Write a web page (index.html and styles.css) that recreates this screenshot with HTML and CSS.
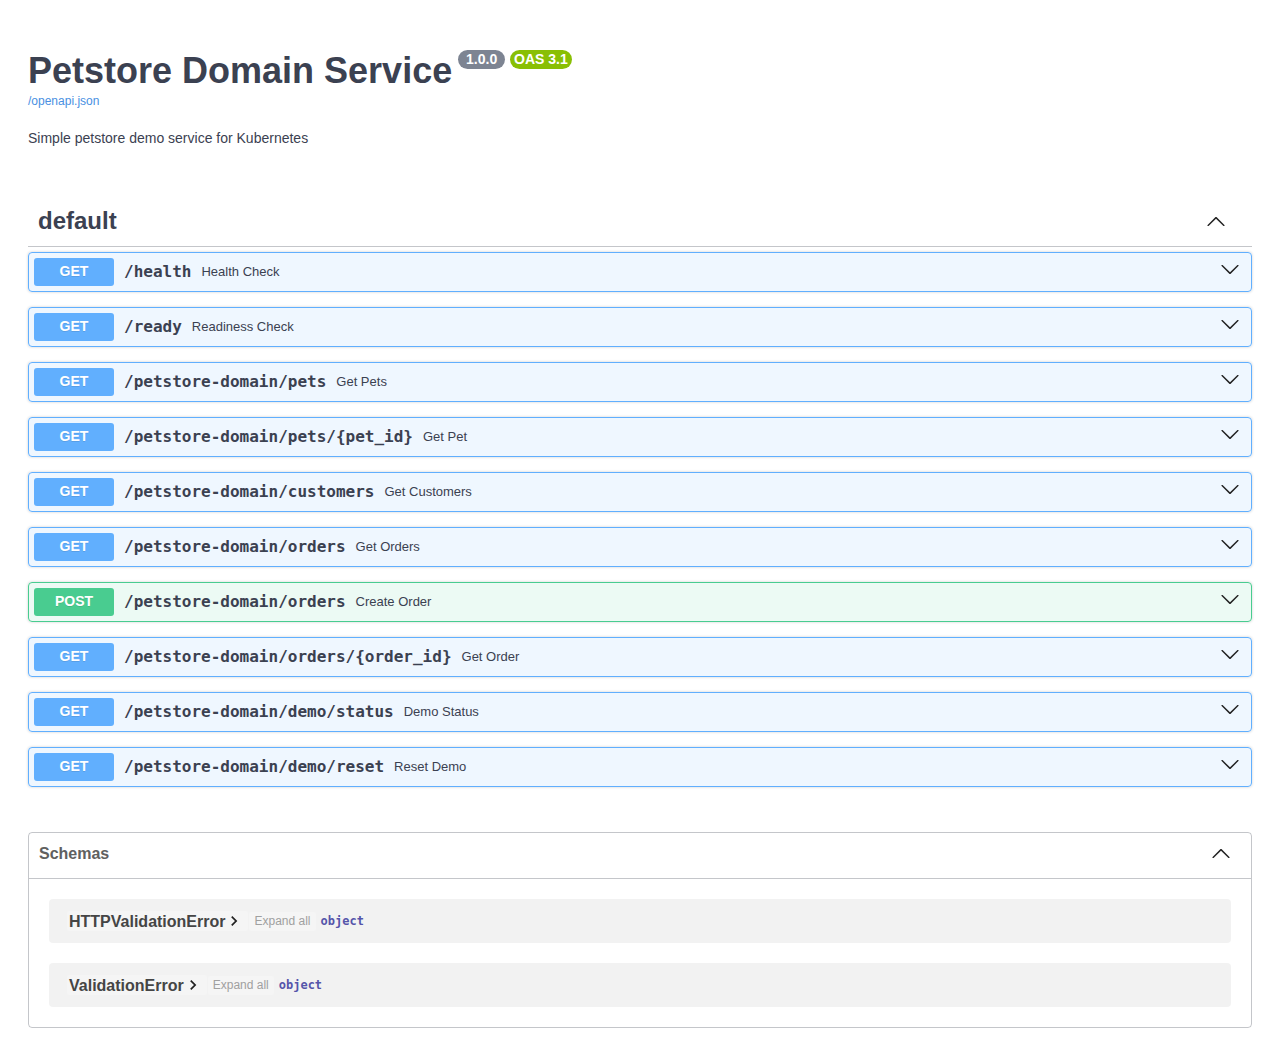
FILE: index.html
```html
<!DOCTYPE html>
<html lang="en">
<head>
<meta charset="utf-8">
<title>Petstore Domain Service</title>
<link rel="stylesheet" href="styles.css">
</head>
<body>
<div class="wrapper">
  <div class="info">
    <div class="title-row">
      <h2 class="title">Petstore Domain Service</h2>
      <span class="badge badge-version"> 1.0.0 </span>
      <span class="badge badge-oas">OAS 3.1</span>
    </div>
    <a class="link" href="#">/openapi.json</a>
    <p class="description">Simple petstore demo service for Kubernetes</p>
  </div>

  <div class="tag-section">
    <h3 class="tag">
      <span class="tag-name">default</span>
      <svg class="tag-arrow" viewBox="0 0 20 20"><path d="M17.418 14.908c.272.268.709.268.979 0s.271-.701 0-.969l-7.908-7.83c-.27-.268-.707-.268-.979 0l-7.908 7.83c-.27.268-.27.701 0 .969.271.268.709.268.979 0L10 7.767l7.418 7.141z"/></svg>
    </h3>

    <div class="opblock get"><span class="method">GET</span><span class="path">/health</span><span class="summary">Health Check</span><svg class="arrow" viewBox="0 0 20 20"><path d="M17.418 6.109c.272-.268.709-.268.979 0s.271.701 0 .969l-7.908 7.83c-.27.268-.707.268-.979 0l-7.908-7.83c-.27-.268-.27-.701 0-.969.271-.268.709-.268.979 0L10 13.25l7.418-7.141z"/></svg></div>
    <div class="opblock get"><span class="method">GET</span><span class="path">/ready</span><span class="summary">Readiness Check</span><svg class="arrow" viewBox="0 0 20 20"><path d="M17.418 6.109c.272-.268.709-.268.979 0s.271.701 0 .969l-7.908 7.83c-.27.268-.707.268-.979 0l-7.908-7.83c-.27-.268-.27-.701 0-.969.271-.268.709-.268.979 0L10 13.25l7.418-7.141z"/></svg></div>
    <div class="opblock get"><span class="method">GET</span><span class="path">/petstore-domain/pets</span><span class="summary">Get Pets</span><svg class="arrow" viewBox="0 0 20 20"><path d="M17.418 6.109c.272-.268.709-.268.979 0s.271.701 0 .969l-7.908 7.83c-.27.268-.707.268-.979 0l-7.908-7.83c-.27-.268-.27-.701 0-.969.271-.268.709-.268.979 0L10 13.25l7.418-7.141z"/></svg></div>
    <div class="opblock get"><span class="method">GET</span><span class="path">/petstore-domain/pets/{pet_id}</span><span class="summary">Get Pet</span><svg class="arrow" viewBox="0 0 20 20"><path d="M17.418 6.109c.272-.268.709-.268.979 0s.271.701 0 .969l-7.908 7.83c-.27.268-.707.268-.979 0l-7.908-7.83c-.27-.268-.27-.701 0-.969.271-.268.709-.268.979 0L10 13.25l7.418-7.141z"/></svg></div>
    <div class="opblock get"><span class="method">GET</span><span class="path">/petstore-domain/customers</span><span class="summary">Get Customers</span><svg class="arrow" viewBox="0 0 20 20"><path d="M17.418 6.109c.272-.268.709-.268.979 0s.271.701 0 .969l-7.908 7.83c-.27.268-.707.268-.979 0l-7.908-7.83c-.27-.268-.27-.701 0-.969.271-.268.709-.268.979 0L10 13.25l7.418-7.141z"/></svg></div>
    <div class="opblock get"><span class="method">GET</span><span class="path">/petstore-domain/orders</span><span class="summary">Get Orders</span><svg class="arrow" viewBox="0 0 20 20"><path d="M17.418 6.109c.272-.268.709-.268.979 0s.271.701 0 .969l-7.908 7.83c-.27.268-.707.268-.979 0l-7.908-7.83c-.27-.268-.27-.701 0-.969.271-.268.709-.268.979 0L10 13.25l7.418-7.141z"/></svg></div>
    <div class="opblock post"><span class="method">POST</span><span class="path">/petstore-domain/orders</span><span class="summary">Create Order</span><svg class="arrow" viewBox="0 0 20 20"><path d="M17.418 6.109c.272-.268.709-.268.979 0s.271.701 0 .969l-7.908 7.83c-.27.268-.707.268-.979 0l-7.908-7.83c-.27-.268-.27-.701 0-.969.271-.268.709-.268.979 0L10 13.25l7.418-7.141z"/></svg></div>
    <div class="opblock get"><span class="method">GET</span><span class="path">/petstore-domain/orders/{order_id}</span><span class="summary">Get Order</span><svg class="arrow" viewBox="0 0 20 20"><path d="M17.418 6.109c.272-.268.709-.268.979 0s.271.701 0 .969l-7.908 7.83c-.27.268-.707.268-.979 0l-7.908-7.83c-.27-.268-.27-.701 0-.969.271-.268.709-.268.979 0L10 13.25l7.418-7.141z"/></svg></div>
    <div class="opblock get"><span class="method">GET</span><span class="path">/petstore-domain/demo/status</span><span class="summary">Demo Status</span><svg class="arrow" viewBox="0 0 20 20"><path d="M17.418 6.109c.272-.268.709-.268.979 0s.271.701 0 .969l-7.908 7.83c-.27.268-.707.268-.979 0l-7.908-7.83c-.27-.268-.27-.701 0-.969.271-.268.709-.268.979 0L10 13.25l7.418-7.141z"/></svg></div>
    <div class="opblock get"><span class="method">GET</span><span class="path">/petstore-domain/demo/reset</span><span class="summary">Reset Demo</span><svg class="arrow" viewBox="0 0 20 20"><path d="M17.418 6.109c.272-.268.709-.268.979 0s.271.701 0 .969l-7.908 7.83c-.27.268-.707.268-.979 0l-7.908-7.83c-.27-.268-.27-.701 0-.969.271-.268.709-.268.979 0L10 13.25l7.418-7.141z"/></svg></div>
  </div>

  <section class="models">
    <h4 class="models-head">
      <span class="models-title">Schemas</span>
      <svg class="models-arrow" viewBox="0 0 20 20"><path d="M17.418 14.908c.272.268.709.268.979 0s.271-.701 0-.969l-7.908-7.83c-.27-.268-.707-.268-.979 0l-7.908 7.83c-.27.268-.27.701 0 .969.271.268.709.268.979 0L10 7.767l7.418 7.141z"/></svg>
    </h4>
    <div class="model-container">
      <span class="model-name">HTTPValidationError<svg class="model-toggle" viewBox="0 0 24 24"><path d="M10 6 8.59 7.41 13.17 12l-4.58 4.59L10 18l6-6z"/></svg></span>
      <span class="expand-all">Expand all</span>
      <span class="prop-type">object</span>
    </div>
    <div class="model-container">
      <span class="model-name">ValidationError<svg class="model-toggle" viewBox="0 0 24 24"><path d="M10 6 8.59 7.41 13.17 12l-4.58 4.59L10 18l6-6z"/></svg></span>
      <span class="expand-all">Expand all</span>
      <span class="prop-type">object</span>
    </div>
  </section>
</div>
</body>
</html>
```

FILE: styles.css
```css
html, body {
  margin: 0;
  padding: 0;
  background: #fff;
}

body {
  font-family: "Liberation Sans", Arial, sans-serif;
  color: #3b4151;
}

.wrapper {
  padding: 0 28px;
}

/* ---------- info ---------- */
.info {
  margin: 50px 0;
}

.title-row {
  display: flex;
  align-items: flex-start;
}

.title {
  margin: 0;
  font-size: 36px;
  line-height: 42px;
  font-weight: 700;
  color: #3b4151;
}

.badge {
  margin-left: 5px;
  padding: 2px 4px;
  border-radius: 57px;
  font-size: 14px;
  line-height: 15px;
  font-weight: 700;
  color: #fff;
  white-space: pre;
}

.badge-version {
  margin-left: 6px;
  background: #7d8492;
}

.badge-oas {
  background: #89bf04;
}

.link {
  display: block;
  margin-top: 2px;
  font-size: 12px;
  line-height: 14px;
  color: #4990e2;
  text-decoration: none;
}

.description {
  margin: 22px 0 0;
  font-size: 14px;
  line-height: 16px;
  color: #3b4151;
}

/* ---------- tag ---------- */
.tag-section {
  display: flow-root;
}

.tag {
  display: flex;
  align-items: center;
  margin: 0 0 5px;
  padding: 10px 20px 10px 10px;
  border-bottom: 1px solid rgba(59, 65, 81, 0.3);
  font-size: 24px;
  line-height: 30px;
  font-weight: 700;
  color: #3b4151;
}

.tag-name {
  flex: 1;
}

.tag-arrow {
  width: 20px;
  height: 20px;
  margin-right: 6px;
  fill: #222;
}

/* ---------- operations ---------- */
.opblock {
  display: flex;
  align-items: center;
  margin-bottom: 15px;
  padding: 5px;
  border: 1px solid #61affe;
  border-radius: 4px;
  background: rgba(97, 175, 254, 0.1);
  box-shadow: 0 0 3px rgba(0, 0, 0, 0.19);
}

.opblock.post {
  border-color: #49cc90;
  background: rgba(73, 204, 144, 0.1);
}

.method {
  min-width: 80px;
  padding: 5px 0 7px;
  border-radius: 3px;
  background: #61affe;
  color: #fff;
  font-size: 14px;
  line-height: 16px;
  font-weight: 700;
  text-align: center;
  text-shadow: 0 1px 0 rgba(0, 0, 0, 0.1);
}

.post .method {
  background: #49cc90;
}

.path {
  padding: 0 10px 2px;
  font-family: "DejaVu Sans Mono", "Liberation Mono", monospace;
  font-size: 16px;
  font-weight: 700;
  color: #3b4151;
}

.summary {
  flex: 1;
  padding-bottom: 2px;
  font-size: 13px;
  color: #3b4151;
}

.arrow {
  width: 20px;
  height: 20px;
  margin: 0 6px 7px 0;
  fill: #222;
}

/* ---------- models ---------- */
.models {
  margin: 30px 0;
  padding-bottom: 20px;
  border: 1px solid rgba(59, 65, 81, 0.3);
  border-radius: 4px;
}

.models-head {
  display: flex;
  align-items: center;
  margin: 0;
  padding: 8px 20px 12px 10px;
  border-bottom: 1px solid rgba(59, 65, 81, 0.3);
  font-size: 16px;
  line-height: 25px;
  font-weight: 700;
  color: #606060;
}

.models-title {
  flex: 1;
}

.models-arrow {
  width: 20px;
  height: 20px;
  margin-bottom: 2px;
  fill: #222;
}

.model-container {
  display: flex;
  align-items: center;
  height: 44px;
  margin: 20px 20px 0;
  padding: 0 18px;
  border-radius: 4px;
  background: rgba(0, 0, 0, 0.05);
}

.model-name {
  display: flex;
  align-items: center;
  padding: 0 2px;
  border-radius: 2px;
  background: rgba(255, 255, 255, 0.25);
  font-size: 16px;
  line-height: 19px;
  font-weight: 700;
  color: #454545;
}

.model-toggle {
  width: 20px;
  height: 20px;
  margin-left: -1px;
  margin-right: 2px;
  fill: #222;
}

.expand-all {
  margin-left: 1px;
  padding: 0 5px;
  line-height: 19px;
  border-radius: 2px;
  background: rgba(255, 255, 255, 0.25);
  font-size: 12px;
  color: #a0a0a0;
}

.prop-type {
  margin-left: 5px;
  font-family: "DejaVu Sans Mono", "Liberation Mono", monospace;
  font-size: 12px;
  font-weight: 700;
  color: #55a;
}
```
